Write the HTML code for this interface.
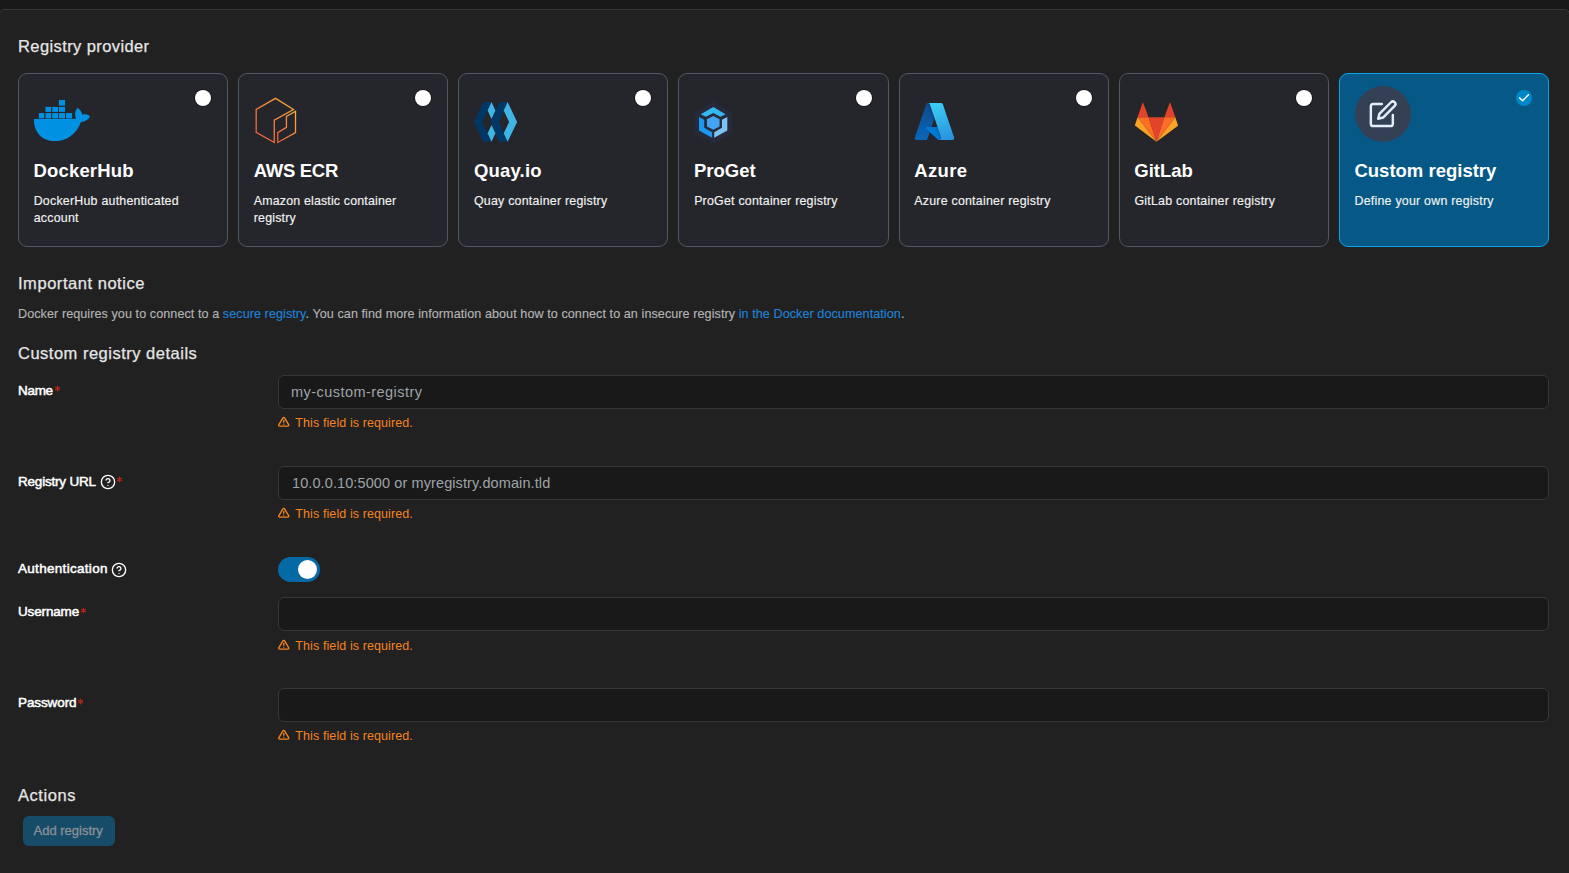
<!DOCTYPE html>
<html><head><meta charset="utf-8"><title>Registry</title>
<style>
html,body{margin:0;padding:0;}
body{width:1569px;height:873px;overflow:hidden;background:#181818;position:relative;
font-family:"Liberation Sans",sans-serif;}
.t{position:absolute;white-space:nowrap;}
.h{-webkit-text-stroke:0.25px currentColor;}
.lb{-webkit-text-stroke:0.5px currentColor;}
.bt{-webkit-text-stroke:0.3px currentColor;}
.ds{-webkit-text-stroke:0.15px currentColor;}
.abs{position:absolute;}
.panel{position:absolute;left:-1px;top:9px;width:1571px;height:900px;background:#212121;
border:1px solid #383838;border-radius:5px;box-sizing:border-box;}
.card{position:absolute;top:73px;width:210px;height:174px;box-sizing:border-box;background:#25262b;
border:1px solid #4f5864;border-radius:9px;}
.card.sel{background:#065986;border-color:#0ba5ec;}
.radio{position:absolute;width:16px;height:16px;border-radius:50%;background:#fff;box-shadow:0 0 0 1px rgba(0,0,0,.35);}
.input{position:absolute;left:278px;width:1271px;height:34px;box-sizing:border-box;background:#191919;
border:1px solid #373737;border-radius:6px;}
a{color:#1e82d8;text-decoration:none;}
</style></head><body>
<div class="panel"></div>
<div class="t h" style="left:18.00px;top:38.03px;font-size:16.5px;line-height:16.5px;color:#e6e6e6;letter-spacing:0.4px;">Registry provider</div>
<div class="card" style="left:18.0000px;width:210.142857px;"></div>
<div class="card" style="left:238.1429px;width:210.142857px;"></div>
<div class="card" style="left:458.2857px;width:210.142857px;"></div>
<div class="card" style="left:678.4286px;width:210.142857px;"></div>
<div class="card" style="left:898.5714px;width:210.142857px;"></div>
<div class="card" style="left:1118.7143px;width:210.142857px;"></div>
<div class="card sel" style="left:1338.8571px;width:210.142857px;"></div>
<div class="t " style="left:33.60px;top:162.34px;font-size:18.5px;line-height:18.5px;color:#ffffff;font-weight:700;letter-spacing:0.15px;">DockerHub</div>
<div class="t ds" style="left:33.70px;top:195.30px;font-size:12.4px;line-height:12.4px;color:#f2f2f2;letter-spacing:0.23px;">DockerHub authenticated</div>
<div class="t ds" style="left:33.70px;top:212.30px;font-size:12.4px;line-height:12.4px;color:#f2f2f2;letter-spacing:0.23px;">account</div>
<div class="radio" style="left:195.143px;top:90px;"></div>
<div class="t " style="left:253.74px;top:162.34px;font-size:18.5px;line-height:18.5px;color:#ffffff;font-weight:700;letter-spacing:-0.3px;">AWS ECR</div>
<div class="t ds" style="left:253.84px;top:195.30px;font-size:12.4px;line-height:12.4px;color:#f2f2f2;letter-spacing:0.17px;">Amazon elastic container</div>
<div class="t ds" style="left:253.84px;top:212.30px;font-size:12.4px;line-height:12.4px;color:#f2f2f2;letter-spacing:0.17px;">registry</div>
<div class="radio" style="left:415.286px;top:90px;"></div>
<div class="t " style="left:473.89px;top:162.34px;font-size:18.5px;line-height:18.5px;color:#ffffff;font-weight:700;letter-spacing:0.2px;">Quay.io</div>
<div class="t ds" style="left:473.99px;top:195.30px;font-size:12.4px;line-height:12.4px;color:#f2f2f2;letter-spacing:0.23px;">Quay container registry</div>
<div class="radio" style="left:635.429px;top:90px;"></div>
<div class="t " style="left:694.03px;top:162.34px;font-size:18.5px;line-height:18.5px;color:#ffffff;font-weight:700;">ProGet</div>
<div class="t ds" style="left:694.13px;top:195.30px;font-size:12.4px;line-height:12.4px;color:#f2f2f2;letter-spacing:0.23px;">ProGet container registry</div>
<div class="radio" style="left:855.571px;top:90px;"></div>
<div class="t " style="left:914.17px;top:162.34px;font-size:18.5px;line-height:18.5px;color:#ffffff;font-weight:700;letter-spacing:0.4px;">Azure</div>
<div class="t ds" style="left:914.27px;top:195.30px;font-size:12.4px;line-height:12.4px;color:#f2f2f2;letter-spacing:0.23px;">Azure container registry</div>
<div class="radio" style="left:1075.714px;top:90px;"></div>
<div class="t " style="left:1134.31px;top:162.34px;font-size:18.5px;line-height:18.5px;color:#ffffff;font-weight:700;">GitLab</div>
<div class="t ds" style="left:1134.41px;top:195.30px;font-size:12.4px;line-height:12.4px;color:#f2f2f2;letter-spacing:0.23px;">GitLab container registry</div>
<div class="radio" style="left:1295.857px;top:90px;"></div>
<div class="t " style="left:1354.46px;top:162.34px;font-size:18.5px;line-height:18.5px;color:#ffffff;font-weight:700;">Custom registry</div>
<div class="t ds" style="left:1354.56px;top:195.30px;font-size:12.4px;line-height:12.4px;color:#f2f2f2;letter-spacing:0.23px;">Define your own registry</div>
<svg class="abs" style="left:1516px;top:90px" width="16" height="16" viewBox="0 0 16 16">
<circle cx="8" cy="8" r="8" fill="#0086c9"/>
<polyline points="3.6,7.9 6.6,10.7 12.5,4.8" fill="none" stroke="#fff" stroke-width="1.5" stroke-linecap="round" stroke-linejoin="round"/>
</svg>
<svg class="abs" style="left:30px;top:95px" width="65" height="50" viewBox="0 0 1135 873">
<g fill="#0091e2">
<rect x="505" y="88" width="107" height="97"/>
<rect x="270" y="208" width="100" height="87"/><rect x="388" y="208" width="102" height="87"/><rect x="505" y="208" width="107" height="87"/>
<rect x="155" y="315" width="93" height="93"/><rect x="270" y="315" width="100" height="93"/><rect x="388" y="315" width="102" height="93"/><rect x="505" y="315" width="107" height="93"/><rect x="630" y="315" width="105" height="93"/>
<path d="M68,425 C68,640 200,805 420,805 C640,805 810,690 890,470 C960,465 1020,430 1048,375 C1010,340 960,330 915,345 C905,290 870,245 828,225 C785,270 775,345 805,415 L68,420 Z"/>
</g></svg>
<svg class="abs" style="left:250px;top:93px" width="52" height="55" viewBox="0 0 825 873">
<defs><linearGradient id="aws" x1="0" y1="1" x2="1" y2="0"><stop offset="0" stop-color="#e9573a"/><stop offset="1" stop-color="#f9b13a"/></linearGradient></defs>
<g fill="none" stroke="url(#aws)" stroke-width="21" stroke-linejoin="miter">
<path d="M690,262 L405,85 L98,262 L98,625 L385,785 L385,430 Z"/>
<path d="M440,785 L440,630 L578,545 L578,370 L722,290 L722,630 Z"/>
</g></svg>
<svg class="abs" style="left:468px;top:96px" width="54" height="52" viewBox="0 0 907 873">
<g fill="#003764">
<path d="M255,100 L395,100 L235,435 L395,770 L255,770 L100,435 Z"/>
<path d="M525,100 L665,100 L520,435 L665,770 L525,770 L380,435 Z"/>
</g>
<g fill="#40b4e5">
<path d="M395,100 L460,245 L395,385 L330,245 Z"/>
<path d="M395,485 L460,625 L395,770 L330,625 Z"/>
<path d="M665,100 L825,435 L665,770 L600,625 L690,435 L600,245 Z"/>
</g></svg>
<svg class="abs" style="left:688px;top:96px" width="52" height="52" viewBox="0 0 873 873">
<path d="M425,112 L725,277 L725,623 L425,788 L120,623 L120,277 Z" fill="#262b3b" stroke="#262b3b" stroke-width="22" stroke-linejoin="round"/>
<path d="M425,185 L630,305 L545,350 L425,285 L300,350 L215,305 Z" fill="#34b8f2"/>
<path d="M185,352 L272,398 L272,535 L405,610 L405,700 L185,580 Z" fill="#1b98f1"/>
<path d="M660,352 L660,580 L440,700 L440,610 L570,535 L570,398 Z" fill="#7fc3f4"/>
<path d="M425,335 L530,392 L530,510 L425,565 L318,510 L318,392 Z" fill="#44a4f2"/>
</svg>
<svg class="abs" style="left:913px;top:100px" width="43" height="43" viewBox="0 0 96 96">
<defs>
<linearGradient id="az_a" x1="-1032.17" x2="-1059.21" y1="145.31" y2="65.43" gradientTransform="matrix(1 0 0 -1 1075 158)" gradientUnits="userSpaceOnUse"><stop offset="0" stop-color="#114a8b"/><stop offset="1" stop-color="#0669bc"/></linearGradient>
<linearGradient id="az_b" x1="-1023.73" x2="-1029.98" y1="108.08" y2="105.97" gradientTransform="matrix(1 0 0 -1 1075 158)" gradientUnits="userSpaceOnUse"><stop offset="0" stop-opacity=".3"/><stop offset=".071" stop-opacity=".2"/><stop offset=".321" stop-opacity=".1"/><stop offset=".623" stop-opacity=".05"/><stop offset="1" stop-opacity="0"/></linearGradient>
<linearGradient id="az_c" x1="-1027.16" x2="-997.48" y1="147.64" y2="68.56" gradientTransform="matrix(1 0 0 -1 1075 158)" gradientUnits="userSpaceOnUse"><stop offset="0" stop-color="#3ccbf4"/><stop offset="1" stop-color="#2892df"/></linearGradient>
</defs>
<path fill="url(#az_a)" d="M33.338 6.544h26.038l-27.03 80.087a4.152 4.152 0 0 1-3.933 2.824H8.149a4.145 4.145 0 0 1-3.928-5.47L29.404 9.368a4.152 4.152 0 0 1 3.934-2.825z"/>
<path fill="#0078d4" d="M71.175 60.261h-41.29a1.911 1.911 0 0 0-1.305 3.309l26.532 24.764a4.171 4.171 0 0 0 2.846 1.121h23.38z"/>
<path fill="url(#az_b)" d="M33.338 6.544a4.118 4.118 0 0 0-3.943 2.879L4.252 83.917a4.14 4.14 0 0 0 3.908 5.538h20.787a4.443 4.443 0 0 0 3.41-2.9l5.014-14.777 17.91 16.705a4.237 4.237 0 0 0 2.666.972H81.24L71.024 60.261l-29.781.007L59.47 6.544z"/>
<path fill="url(#az_c)" d="M66.595 9.364a4.145 4.145 0 0 0-3.928-2.82H33.648a4.146 4.146 0 0 1 3.928 2.82l25.184 74.62a4.146 4.146 0 0 1-3.928 5.472h29.02a4.146 4.146 0 0 0 3.927-5.472z"/>
</svg>
<svg class="abs" style="left:1128px;top:96px" width="56" height="52" viewBox="0 0 940 873">
<path d="M250,100 L160,355 L345,355 Z" fill="#e24329"/>
<path d="M705,100 L610,355 L795,355 Z" fill="#e24329"/>
<path d="M345,355 L610,355 L478,770 Z" fill="#e24329"/>
<path d="M160,355 L345,355 L478,770 Z" fill="#fc6d26"/>
<path d="M610,355 L795,355 L478,770 Z" fill="#fc6d26"/>
<path d="M160,355 L115,495 L478,770 Z" fill="#fca326"/>
<path d="M795,355 L840,500 L478,770 Z" fill="#fca326"/>
</svg>
<svg class="abs" style="left:1355px;top:86px" width="56" height="56" viewBox="0 0 56 56">
<circle cx="28" cy="28" r="28" fill="#344054"/>
<g transform="translate(13.4,13.2) scale(1.222)" fill="none" stroke="#e4eefa" stroke-width="2" stroke-linecap="round" stroke-linejoin="round">
<path d="M11 4H4a2 2 0 0 0-2 2v14a2 2 0 0 0 2 2h14a2 2 0 0 0 2-2v-7"/>
<path d="M18.5 2.5a2.121 2.121 0 0 1 3 3L12 15l-4 1 1-4 9.5-9.5z"/>
</g></svg>
<div class="t h" style="left:18.00px;top:275.13px;font-size:16.5px;line-height:16.5px;color:#e6e6e6;letter-spacing:0.54px;">Important notice</div>
<div class="t ds" style="left:18.00px;top:307.83px;font-size:12.6px;line-height:12.6px;color:#b3b3b3;letter-spacing:0.07px;">Docker requires you to connect to a <a>secure registry</a>. You can find more information about how to connect to an insecure registry <a>in the Docker documentation</a>.</div>
<div class="t h" style="left:18.00px;top:344.83px;font-size:16.5px;line-height:16.5px;color:#e6e6e6;letter-spacing:0.5px;">Custom registry details</div>
<div class="t lb" style="left:18.00px;top:383.57px;font-size:13.5px;line-height:13.5px;color:#ffffff;letter-spacing:-0.3px;">Name</div>
<svg class="abs" style="left:53.7px;top:384.5px" width="7" height="7" viewBox="-3.5 -3.5 7 7"><g stroke="#b8271e" stroke-width="1.05" stroke-linecap="round"><line x1="0" y1="-2.5" x2="0" y2="2.5"/><line x1="-2.17" y1="-1.25" x2="2.17" y2="1.25"/><line x1="-2.17" y1="1.25" x2="2.17" y2="-1.25"/></g></svg>
<div class="input" style="top:375px;"></div>
<div class="t " style="left:291.00px;top:384.73px;font-size:14.5px;line-height:14.5px;color:#9ea3a8;letter-spacing:0.45px;">my-custom-registry</div>
<svg class="abs" style="left:278px;top:416.1px" width="11.5" height="11.5" viewBox="0 0 24 24" fill="none" stroke="#f5841f" stroke-width="2.8" stroke-linecap="round" stroke-linejoin="round"><path d="M10.29 3.86L1.82 18a2 2 0 0 0 1.71 3h16.94a2 2 0 0 0 1.71-3L13.71 3.86a2 2 0 0 0-3.42 0z"/><path d="M12 9v4"/><path d="M12 17h.01"/></svg>
<div class="t " style="left:295.30px;top:417.12px;font-size:12.5px;line-height:12.5px;color:#f5841f;letter-spacing:0.1px;">This field is required.</div>
<div class="t lb" style="left:18.00px;top:474.67px;font-size:13.5px;line-height:13.5px;color:#ffffff;letter-spacing:-0.2px;">Registry URL</div>
<svg class="abs" style="left:100px;top:474px" width="16" height="16" viewBox="0 0 24 24" fill="none" stroke="#fff" stroke-width="2" stroke-linecap="round" stroke-linejoin="round"><circle cx="12" cy="12" r="10"/><path d="M9.09 9a3 3 0 0 1 5.83 1c0 2-3 3-3 3"/><path d="M12 17h.01"/></svg>
<svg class="abs" style="left:116.0px;top:475.5px" width="7" height="7" viewBox="-3.5 -3.5 7 7"><g stroke="#b8271e" stroke-width="1.05" stroke-linecap="round"><line x1="0" y1="-2.5" x2="0" y2="2.5"/><line x1="-2.17" y1="-1.25" x2="2.17" y2="1.25"/><line x1="-2.17" y1="1.25" x2="2.17" y2="-1.25"/></g></svg>
<div class="input" style="top:466px;"></div>
<div class="t " style="left:292.00px;top:475.83px;font-size:14.5px;line-height:14.5px;color:#9ea3a8;letter-spacing:0.1px;">10.0.0.10:5000 or myregistry.domain.tld</div>
<svg class="abs" style="left:278px;top:506.8px" width="11.5" height="11.5" viewBox="0 0 24 24" fill="none" stroke="#f5841f" stroke-width="2.8" stroke-linecap="round" stroke-linejoin="round"><path d="M10.29 3.86L1.82 18a2 2 0 0 0 1.71 3h16.94a2 2 0 0 0 1.71-3L13.71 3.86a2 2 0 0 0-3.42 0z"/><path d="M12 9v4"/><path d="M12 17h.01"/></svg>
<div class="t " style="left:295.30px;top:507.82px;font-size:12.5px;line-height:12.5px;color:#f5841f;letter-spacing:0.1px;">This field is required.</div>
<div class="t lb" style="left:18.00px;top:562.07px;font-size:13.5px;line-height:13.5px;color:#ffffff;letter-spacing:0.3px;">Authentication</div>
<svg class="abs" style="left:111px;top:561.5px" width="16" height="16" viewBox="0 0 24 24" fill="none" stroke="#fff" stroke-width="2" stroke-linecap="round" stroke-linejoin="round"><circle cx="12" cy="12" r="10"/><path d="M9.09 9a3 3 0 0 1 5.83 1c0 2-3 3-3 3"/><path d="M12 17h.01"/></svg>
<div class="abs" style="left:278px;top:557px;width:42px;height:25px;border-radius:12.5px;background:#036aa6;"></div>
<div class="abs" style="left:297.8px;top:559.8px;width:19.4px;height:19.4px;border-radius:50%;background:#fff;"></div>
<div class="t lb" style="left:18.00px;top:605.47px;font-size:13.5px;line-height:13.5px;color:#ffffff;letter-spacing:-0.15px;">Username</div>
<svg class="abs" style="left:80.0px;top:606.5px" width="7" height="7" viewBox="-3.5 -3.5 7 7"><g stroke="#b8271e" stroke-width="1.05" stroke-linecap="round"><line x1="0" y1="-2.5" x2="0" y2="2.5"/><line x1="-2.17" y1="-1.25" x2="2.17" y2="1.25"/><line x1="-2.17" y1="1.25" x2="2.17" y2="-1.25"/></g></svg>
<div class="input" style="top:597px;"></div>
<svg class="abs" style="left:278px;top:638.5px" width="11.5" height="11.5" viewBox="0 0 24 24" fill="none" stroke="#f5841f" stroke-width="2.8" stroke-linecap="round" stroke-linejoin="round"><path d="M10.29 3.86L1.82 18a2 2 0 0 0 1.71 3h16.94a2 2 0 0 0 1.71-3L13.71 3.86a2 2 0 0 0-3.42 0z"/><path d="M12 9v4"/><path d="M12 17h.01"/></svg>
<div class="t " style="left:295.30px;top:639.52px;font-size:12.5px;line-height:12.5px;color:#f5841f;letter-spacing:0.1px;">This field is required.</div>
<div class="t lb" style="left:18.00px;top:696.47px;font-size:13.5px;line-height:13.5px;color:#ffffff;letter-spacing:-0.1px;">Password</div>
<svg class="abs" style="left:77.1px;top:697.5px" width="7" height="7" viewBox="-3.5 -3.5 7 7"><g stroke="#b8271e" stroke-width="1.05" stroke-linecap="round"><line x1="0" y1="-2.5" x2="0" y2="2.5"/><line x1="-2.17" y1="-1.25" x2="2.17" y2="1.25"/><line x1="-2.17" y1="1.25" x2="2.17" y2="-1.25"/></g></svg>
<div class="input" style="top:688px;"></div>
<svg class="abs" style="left:278px;top:729.3px" width="11.5" height="11.5" viewBox="0 0 24 24" fill="none" stroke="#f5841f" stroke-width="2.8" stroke-linecap="round" stroke-linejoin="round"><path d="M10.29 3.86L1.82 18a2 2 0 0 0 1.71 3h16.94a2 2 0 0 0 1.71-3L13.71 3.86a2 2 0 0 0-3.42 0z"/><path d="M12 9v4"/><path d="M12 17h.01"/></svg>
<div class="t " style="left:295.30px;top:730.32px;font-size:12.5px;line-height:12.5px;color:#f5841f;letter-spacing:0.1px;">This field is required.</div>
<div class="t h" style="left:18.00px;top:786.73px;font-size:16.5px;line-height:16.5px;color:#e6e6e6;letter-spacing:0.55px;">Actions</div>
<div class="abs" style="left:23px;top:816px;width:92px;height:30px;border-radius:6px;background:#174c68;"></div>
<div class="t bt" style="left:33.50px;top:824.00px;font-size:13px;line-height:13px;color:#8a9095;">Add registry</div>
</body></html>
